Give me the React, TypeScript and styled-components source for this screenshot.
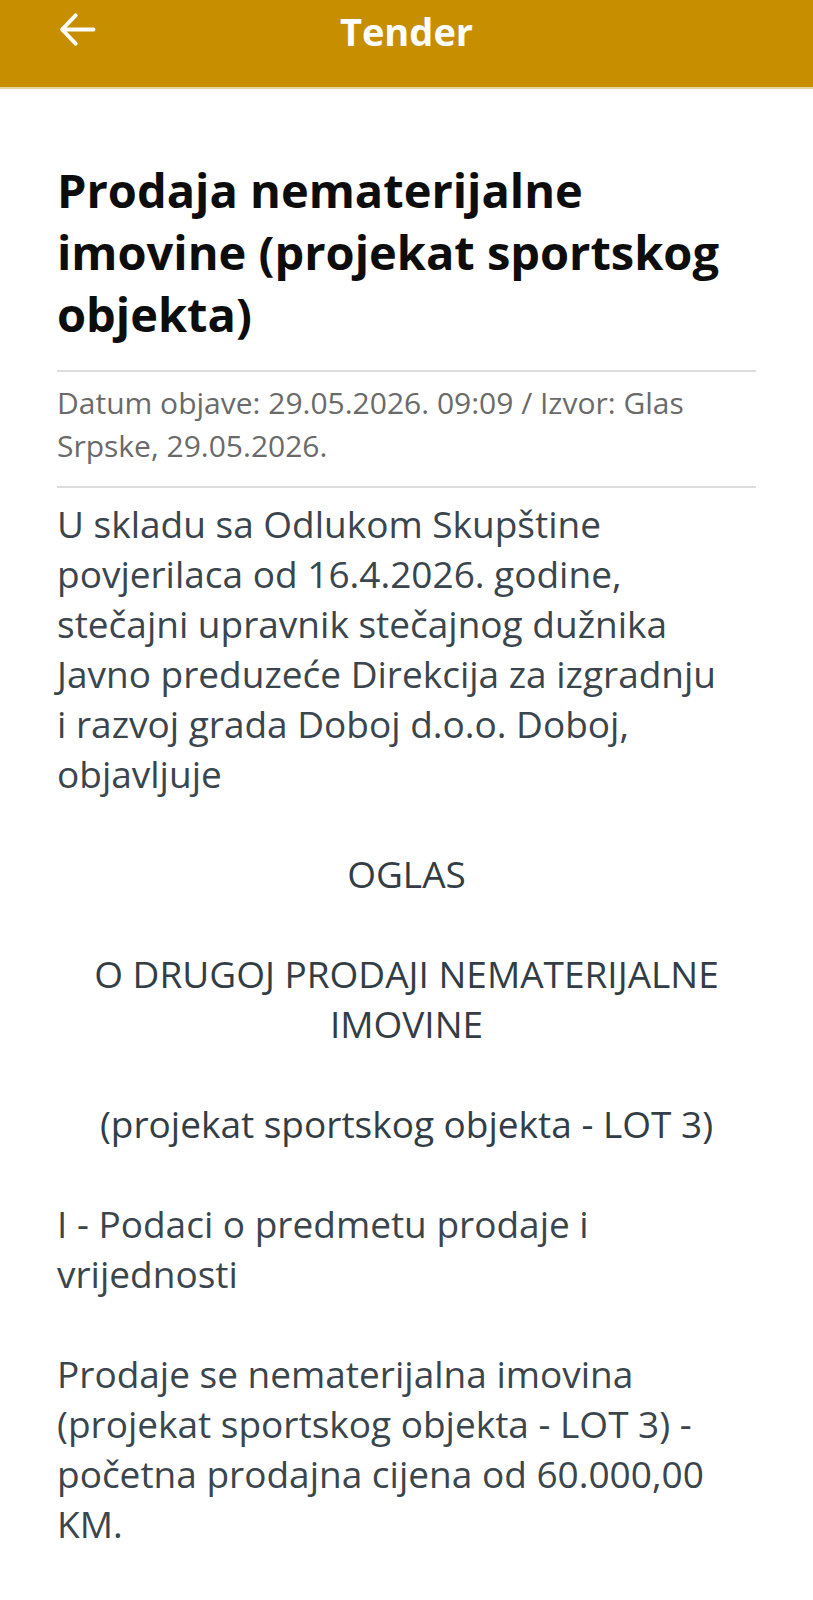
import { FunctionComponent } from 'react';
import styled, { createGlobalStyle } from 'styled-components';

const GlobalStyle = createGlobalStyle`
  html, body {
    margin: 0;
    padding: 0;
    background: #ffffff;
  }

  body {
    font-family: "Open Sans", "Noto Sans", sans-serif;
  }
`;

const Page = styled.div`
  width: 813px;
  min-height: 1600px;
  background: #ffffff;
`;

const TopBar = styled.header`
  height: 89px;
  background-color: #c78e00;
  border-bottom: 2px solid #e6d3a4;
  display: grid;
  grid-template-columns: 140px 1fr 140px;
  align-items: start;
  box-sizing: border-box;
`;

const BackButton = styled.button`
  background: none;
  border: 0;
  padding: 7px 0 0 55px;
  cursor: pointer;
  display: flex;
  align-items: flex-start;
`;

const BarTitle = styled.h1`
  margin: 0;
  padding-top: 5px;
  text-align: center;
  color: #ffffff;
  font-size: 38px;
  font-weight: 700;
  line-height: 52px;
`;

const Content = styled.main`
  padding: 70px 57px 0 57px;
`;

const Heading = styled.h2`
  margin: 0 0 25px;
  color: #0d0d0d;
  font-size: 47px;
  font-weight: 700;
  line-height: 62px;
`;

const Divider = styled.hr`
  border: 0;
  height: 2px;
  background: #dddddd;
  margin: 0;
`;

const Meta = styled.div`
  padding: 9px 0 19px;
  color: #6a6a6a;
  font-size: 30px;
  line-height: 43px;
`;

const Body = styled.div`
  padding-top: 11px;
  color: #3a454d;
  font-size: 37px;
  line-height: 50px;
`;

const Paragraph = styled.p<{ centered?: boolean }>`
  margin: 0 0 50px;
  text-align: ${({ centered }) => (centered ? 'center' : 'left')};
  font-weight: ${({ centered }) => (centered ? 500 : 400)};
  color: ${({ centered }) => (centered ? '#323d45' : 'inherit')};
`;

const ArrowLeft = () => (
  <svg width="45" height="45" viewBox="0 0 24 24" fill="none" stroke="#ffffff" strokeWidth="2.1" strokeLinecap="round" strokeLinejoin="round">
    <path d="M20.5 12H4" />
    <path d="M11 4.5L3.8 12l7.2 7.5" />
  </svg>
);

const App: FunctionComponent = () => (
  <>
    <GlobalStyle />
    <Page>
      <TopBar>
        <BackButton aria-label="Nazad">
          <ArrowLeft />
        </BackButton>
        <BarTitle>Tender</BarTitle>
        <div />
      </TopBar>

      <Content>
        <Heading>Prodaja nematerijalne imovine (projekat sportskog objekta)</Heading>
        <Divider />
        <Meta>Datum objave: 29.05.2026. 09:09 / Izvor: Glas Srpske, 29.05.2026.</Meta>
        <Divider />

        <Body>
          <Paragraph>
            U skladu sa Odlukom Skupštine
            <br />
            povjerilaca od 16.4.2026. godine,
            <br />
            stečajni upravnik stečajnog dužnika
            <br />
            Javno preduzeće Direkcija za izgradnju
            <br />
            i razvoj grada Doboj d.o.o. Doboj,
            <br />
            objavljuje
          </Paragraph>
          <Paragraph centered>OGLAS</Paragraph>
          <Paragraph centered>
            O DRUGOJ PRODAJI NEMATERIJALNE
            <br />
            IMOVINE
          </Paragraph>
          <Paragraph centered>(projekat sportskog objekta - LOT 3)</Paragraph>
          <Paragraph>
            I - Podaci o predmetu prodaje i
            <br />
            vrijednosti
          </Paragraph>
          <Paragraph>
            Prodaje se nematerijalna imovina
            <br />
            (projekat sportskog objekta - LOT 3) -
            <br />
            početna prodajna cijena od 60.000,00
            <br />
            KM.
          </Paragraph>
        </Body>
      </Content>
    </Page>
  </>
);

export default App;
